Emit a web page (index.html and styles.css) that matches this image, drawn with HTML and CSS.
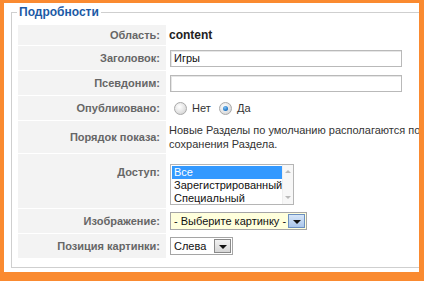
FILE: index.html
```html
<!DOCTYPE html>
<html>
<head>
    <meta charset="utf-8">
    <link rel="stylesheet" href="styles.css">
</head>
<body>
    <div class="frame">
        <fieldset class="details">
            <legend>Подробности</legend>
            <table class="admintable">
                <tr class="row-first">
                    <td class="key">Область:</td>
                    <td><strong>content</strong></td>
                </tr>
                <tr>
                    <td class="key">Заголовок:</td>
                    <td><div class="inputbox">Игры</div></td>
                </tr>
                <tr>
                    <td class="key">Псевдоним:</td>
                    <td><div class="inputbox"></div></td>
                </tr>
                <tr>
                    <td class="key">Опубликовано:</td>
                    <td>
                        <span class="radio"></span><span class="radio-label">Нет</span>
                        <span class="radio checked"></span><span class="radio-label">Да</span>
                    </td>
                </tr>
                <tr class="row-order">
                    <td class="key">Порядок показа:</td>
                    <td class="note">Новые Разделы по умолчанию располагаются по<br>сохранения Раздела.</td>
                </tr>
                <tr class="row-access">
                    <td class="key top">Доступ:</td>
                    <td class="top">
                        <div class="listbox">
                            <div class="options">
                                <div class="option selected">Все</div>
                                <div class="option">Зарегистрированный</div>
                                <div class="option">Специальный</div>
                            </div>
                            <div class="scroll">
                                <span class="up"></span>
                                <span class="down"></span>
                            </div>
                        </div>
                    </td>
                </tr>
                <tr>
                    <td class="key">Изображение:</td>
                    <td>
                        <div class="select yellow">
                            <span class="select-text">- Выберите картинку -</span>
                            <span class="select-btn blue"><i></i></span>
                        </div>
                    </td>
                </tr>
                <tr>
                    <td class="key">Позиция картинки:</td>
                    <td>
                        <div class="select">
                            <span class="select-text short">Слева</span>
                            <span class="select-btn"><i></i></span>
                        </div>
                    </td>
                </tr>
            </table>
        </fieldset>
    </div>
</body>
</html>
```

FILE: styles.css
```css
body {
    margin: 0;
    width: 424px;
    height: 281px;
    background: #fa8a30;
    font-family: "Liberation Sans", Arial, sans-serif;
    overflow: hidden;
}

.frame {
    margin: 3px 5px 0 4px;
    height: 269px;
    background: #fff;
    overflow: hidden;
}

.details {
    margin: 2px 0 0 7px;
    padding: 0 0 8px 5px;
    width: 440px;
    border: 1px solid #cfcfcf;
    border-right: none;
}

.details legend {
    padding: 0 2px;
    color: #1b5aa6;
    font-size: 12px;
    font-weight: bold;
}

.admintable {
    table-layout: fixed;
    border-spacing: 1px;
    width: 430px;
    margin-top: 5px;
    font-size: 12px;
    color: #222;
}

.admintable tr {
    height: 24px;
}

.admintable tr.row-first {
    height: 20px;
}

.admintable tr.row-order {
    height: 32px;
}

.admintable tr.row-access {
    height: 54px;
}

.admintable td {
    padding: 0 0 0 2px;
    vertical-align: middle;
    white-space: nowrap;
}

.admintable td.key {
    width: 142px;
    padding: 0 6px 0 0;
    background: #f3f3f3;
    text-align: right;
    color: #666;
    font-size: 11px;
    font-weight: bold;
}

.admintable td.top {
    vertical-align: top;
}

.admintable td.key.top {
    padding-top: 12px;
}

.admintable td.top .listbox {
    margin-top: 10px;
}

.inputbox {
    width: 227px;
    height: 15px;
    margin-left: 1px;
    border: 1px solid #b9b9b9;
    box-shadow: inset 1px 1px 0 #e6e6e6;
    font-size: 11px;
    line-height: 15px;
    padding-left: 3px;
    color: #111;
}

.radio {
    display: inline-block;
    width: 11px;
    height: 11px;
    border-radius: 50%;
    border: 1px solid #a9a9a9;
    background: radial-gradient(circle at 40% 35%, #fff 0, #e4e4e4 55%, #c9c9c9 100%);
    vertical-align: -3px;
    margin-left: 5px;
    position: relative;
}

.radio.checked::after {
    content: "";
    position: absolute;
    left: 3px;
    top: 3px;
    width: 5px;
    height: 5px;
    border-radius: 50%;
    background: radial-gradient(circle at 40% 35%, #7fc3f5 0, #1a6fc2 70%, #0b4c8e 100%);
}

.radio-label {
    margin-left: 5px;
    color: #333;
    font-size: 11px;
}

.note {
    color: #333;
    font-size: 11px;
    line-height: 14px;
}

.listbox {
    display: flex;
    width: 122px;
    height: 39px;
    margin-left: 1px;
    border: 1px solid #b5b5b5;
    font-size: 11px;
    overflow: hidden;
}

.options {
    flex: 1;
    padding: 1px 0 0 1px;
}

.option {
    height: 13px;
    line-height: 13px;
    padding-left: 2px;
    color: #111;
}

.option.selected {
    background: #3399ff;
    color: #fff;
}

.scroll {
    width: 15px;
    background: #f7f7f7;
    border-left: 1px solid #eee;
    display: flex;
    flex-direction: column;
    justify-content: space-between;
    align-items: center;
    padding: 5px 0;
}

.scroll .up,
.scroll .down {
    width: 0;
    height: 0;
    border-left: 3px solid transparent;
    border-right: 3px solid transparent;
}

.scroll .up {
    border-bottom: 3px solid #b9b9b9;
}

.scroll .down {
    border-top: 3px solid #b9b9b9;
}

.select {
    display: inline-flex;
    align-items: stretch;
    height: 16px;
    margin-left: 1px;
    border: 1px solid #a5a5a5;
    background: #fff;
    font-size: 11px;
    vertical-align: middle;
}

.select.yellow {
    background: #ffffdc;
}

.select-text {
    padding: 0 1px 0 3px;
    line-height: 16px;
    color: #111;
}

.select-text.short {
    width: 38px;
}

.select-btn {
    width: 15px;
    margin: 1px;
    border: 1px solid #8a8a8a;
    background: linear-gradient(#f2f2f2, #d6d6d6);
    display: flex;
    align-items: center;
    justify-content: center;
}

.select-btn.blue {
    border-color: #6b8fc0;
    background: linear-gradient(#d7e6f8, #a9c5ea);
}

.select-btn i {
    width: 0;
    height: 0;
    border-left: 4px solid transparent;
    border-right: 4px solid transparent;
    border-top: 4px solid #111;
    margin-top: 2px;
}
```
